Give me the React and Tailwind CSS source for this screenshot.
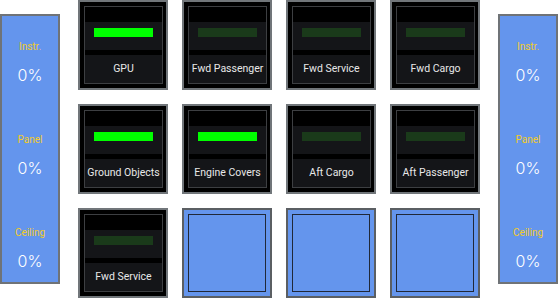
import React from "react";

const tiles = [
  { label: "GPU", on: true },
  { label: "Fwd Passenger", on: false },
  { label: "Fwd Service", on: false },
  { label: "Fwd Cargo", on: false },
  { label: "Ground Objects", on: true },
  { label: "Engine Covers", on: true },
  { label: "Aft Cargo", on: false },
  { label: "Aft Passenger", on: false },
  { label: "Fwd Service", on: false },
  null,
  null,
  null,
];

function SidePanel() {
  const items = ["Instr.", "Panel", "Ceiling"];
  return (
    <div className="w-[60px] h-[270px] bg-[#6495ed] border-2 border-[#6f7377] flex flex-col gap-[51px] pt-[25px]">
      {items.map((it) => (
        <div key={it} className="shrink-0 flex flex-col items-center">
          <div className="text-[10px] leading-[12px] text-[#f2cb2a]" style={{ fontFamily: "Roboto, sans-serif" }}>
            {it}
          </div>
          <div
            className="mt-[14px] text-[16px] leading-[16px] text-white font-light"
            style={{ fontFamily: "Inter, sans-serif" }}
          >
            0%
          </div>
        </div>
      ))}
    </div>
  );
}

function Tile({ t }) {
  if (!t) {
    return (
      <div className="w-[90px] h-[90px] bg-[#6495ed] border-2 border-[#5b5f63] p-[4px]">
        <div className="w-full h-full border border-[#202838]" />
      </div>
    );
  }
  return (
    <div className="w-[90px] h-[90px] bg-black border-2 border-[#71767a] pt-[4px] pl-[4px] pr-[3px] pb-[4px]">
      <div className="w-full h-full border border-[#3d3f42] flex flex-col">
        <div className="h-[15px]" />
        <div className="h-[28px] bg-[#141518] flex justify-center pt-[6px]">
          <div className={`w-[59px] h-[9px] ${t.on ? "bg-[#00ff00]" : "bg-[#1a3a1a]"}`} />
        </div>
        <div className="h-[5px]" />
        <div
          className="h-[28px] bg-[#141518] flex items-center justify-center text-[10.5px] text-[#e8e8e8] whitespace-nowrap"
          style={{ fontFamily: "Roboto, sans-serif" }}
        >
          {t.label}
        </div>
      </div>
    </div>
  );
}

export default function App() {
  return (
    <div className="w-[558px] h-[298px] bg-white flex items-center gap-[18px]">
      <SidePanel />
      <div className="grid grid-cols-[repeat(4,90px)] gap-[14px]">
        {tiles.map((t, i) => (
          <Tile key={i} t={t} />
        ))}
      </div>
      <SidePanel />
    </div>
  );
}
